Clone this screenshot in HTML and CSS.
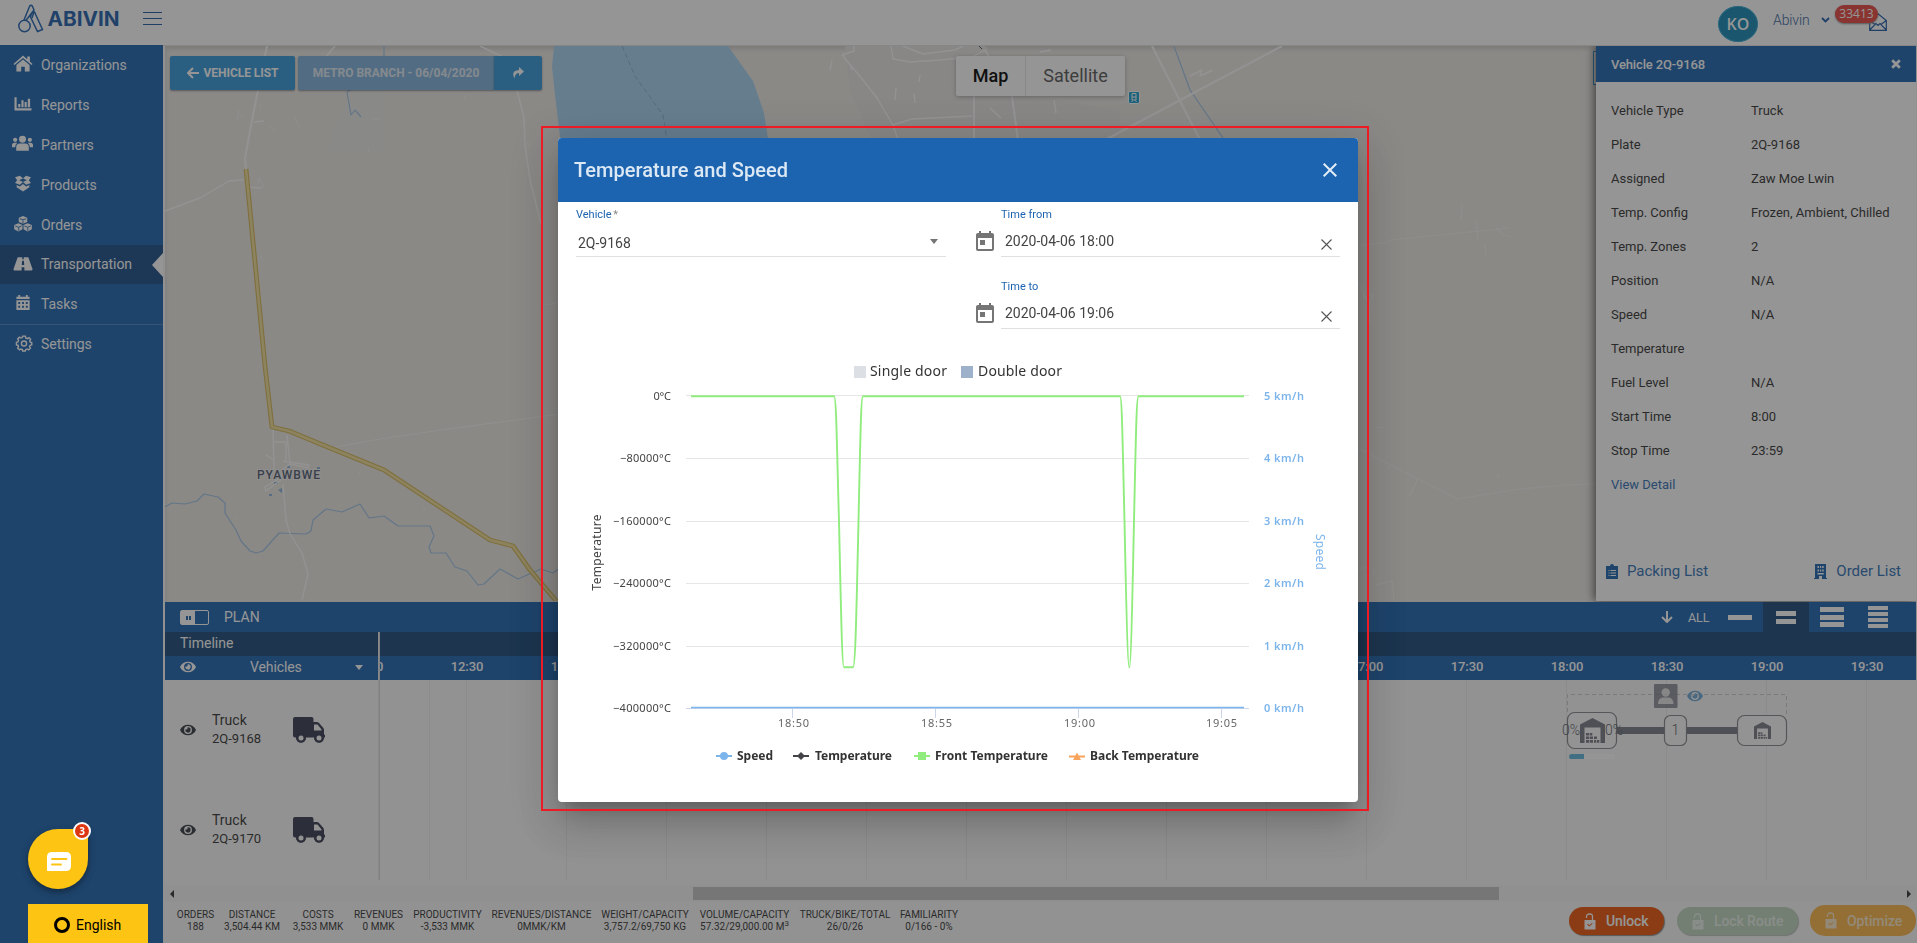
FILE: index.html
```html
<!DOCTYPE html>
<html lang="en">
<head>
<meta charset="utf-8">
<title>Abivin - Transportation</title>
<link rel="stylesheet" href="styles.css">
</head>
<body>
<svg class="defs" width="0" height="0">
  <symbol id="eye" viewBox="0 0 576 512"><path d="M572.500 241.400C518.300 135.600 410.900 64 288 64S57.700 135.600 3.500 241.400a32.400 32.400 0 0 0 0 29.200C57.700 376.400 165.100 448 288 448s230.300-71.600 284.500-177.400a32.400 32.400 0 0 0 0-29.200zM288 400a144 144 0 1 1 144-144 143.900 143.900 0 0 1-144 144zm0-240a95.300 95.300 0 0 0-25.300 3.800 47.900 47.900 0 0 1-66.900 66.900A95.800 95.800 0 1 0 288 160z"/></symbol>
  <symbol id="truck" viewBox="0 0 32 26"><path fill-rule="evenodd" d="M2 0H18.500Q20.500 0 20.500 2V5H24Q25 5 26 6L30 10.500Q31 11.500 31 13V17.500H31.200Q32 17.500 32 18.300V20.500H31A5 5 0 0 1 21 20.500H13A5 5 0 0 1 3 20.500H2Q0 20.500 0 18.500V2Q0 0 2 0ZM21 7.500V13.500H28.500V12.500L24.500 7.500Z"/><circle cx="8" cy="21" r="4.800"/><circle cx="26" cy="21" r="4.800"/><circle cx="8" cy="21" r="2.500" fill="#fafafa"/><circle cx="26" cy="21" r="2.500" fill="#fafafa"/></symbol>
  <symbol id="house" viewBox="0 0 25 25"><path d="M0 25V6.500L12.500 0 25 6.500V25H20.500V9.500H4.500V25Z"/><path d="M6 15h3.300v2.500H6zM10 15h2.300v2.500H10zM6 18.500h3.300V21H6zM10 18.500h3v2.500h-3zM14 18.500h3V21h-3zM6 22h3.300v2.700H6zM10 22h3v2.700h-3zM14 22h2.300v2.700H14zM17 22h2.300v2.700H17z"/></symbol>
  <symbol id="calendar" viewBox="3 1 18 20"><path d="M19 3h-1V1h-2v2H8V1H6v2H5c-1.110 0-2 .9-2 2v14c0 1.100.89 2 2 2h14c1.100 0 2-.9 2-2V5c0-1.100-.9-2-2-2zm0 16H5V8h14v11zM7 10h5v5H7z"/></symbol>
  <symbol id="lock" viewBox="0 0 12 17"><path d="M2.500 5V3.500Q2.500 1 5.500 1T8.500 3.500V7" fill="none" stroke="currentColor" stroke-width="1.300"/><path fill="currentColor" fill-rule="evenodd" d="M.5 7H11.500V16.500H.5ZM3.200 11.500 5.300 13.500 8.700 10.600 8 9.900 5.300 12.200 4 10.800Z"/></symbol>
</svg>

<div class="app">
  <header class="topbar">
    <svg class="logo" width="104" height="32" viewBox="0 0 104 32">
      <g fill="none" stroke="#1f63b1" stroke-width="1.500"><circle cx="6.500" cy="22" r="5.700"/><path d="M6 16 11.500 2.500Q13 .2 14.500 2.500L16 6 7.500 17M13.500 9.500 16.500 8 24.500 25.500 19.500 27.500 12.500 13Z"/><path d="M16 8 14 14"/></g>
      <text x="29.500" y="21.600" textLength="72" lengthAdjust="spacingAndGlyphs" class="logo-text">ABIVIN</text>
    </svg>
    <div class="burger"><i></i><i></i><i></i></div>
    <div class="account">
      <div class="avatar">KO</div>
      <span class="account-name">Abivin</span>
      <svg class="chev" width="9" height="6" viewBox="0 0 9 6"><path d="M1 1 4.500 4.500 8 1" fill="none" stroke="#1f5aa5" stroke-width="1.800"/></svg>
      <div class="mail">
        <svg width="18" height="18" viewBox="0 0 18 18"><path d="M.7 7.500 9 .8 17.300 7.500V17.300H.7ZM.7 7.500 6 11.500M17.300 7.500 12 11.500M.7 17 7 10.500 9 12.500 11 10.500 17.300 17" fill="none" stroke="#1f5aa5" stroke-width="1.200"/></svg>
        <span class="mail-count">33413</span>
      </div>
    </div>
  </header>

  <div class="body">
    <nav class="sidebar">
      <a class="nav-item"><svg viewBox="0 0 18 16"><path d="M9 .5 0 8.500 1 9.500 9 2.800 17 9.500 18 8.500 15.500 6.200V1.500H13V4ZM9 4.300 2.800 9.500V15.500H7.300V11H10.700V15.500H15.200V9.500Z"/></svg><span>Organizations</span></a>
      <a class="nav-item"><svg viewBox="0 0 18 16"><path d="M1 2H3V12.500H17V14.500H1ZM4.500 8.500H6.500V11.500H4.500ZM7.500 5H9.500V11.500H7.500ZM10.500 6.500H12.500V11.500H10.500ZM13.500 3.500H15.700V11.500H13.500Z"/></svg><span>Reports</span></a>
      <a class="nav-item"><svg class="wide" viewBox="0 0 20 16"><circle cx="10" cy="4" r="3.300"/><circle cx="3" cy="4.500" r="2"/><circle cx="17" cy="4.500" r="2"/><path d="M4 15V11.500Q4 8 7.500 8H12.500Q16 8 16 11.500V15ZM0 10Q0 7.300 2.500 7.300H5Q3 9 3 11.500H0ZM20 10Q20 7.300 17.500 7.300H15Q17 9 17 11.500H20Z"/></svg><span>Partners</span></a>
      <a class="nav-item"><svg viewBox="0 0 18 16"><path d="M1.500 2 6 .8 9 3 12 .8 16.500 2 14.500 5 16.500 7.500 12 9.200 9 6.500 6 9.200 1.500 7.500 3.500 5ZM9 3 5.500 5 9 6.500 12.500 5ZM3 9.500 6 10.800 9 8.500 12 10.800 15 9.500V11.500L9 15.500 3 11.500Z" fill-rule="evenodd"/></svg><span>Products</span></a>
      <a class="nav-item"><svg viewBox="0 0 18 16"><path d="M5 2.500 9 1 13 2.500V6.500L9 8.200 5 6.500ZM.7 9.500 4.700 7.700 8.500 9.500V13.500L4.700 15.500.7 13.500ZM9.500 9.500 13.300 7.700 17.300 9.500V13.500L13.300 15.500 9.500 13.500Z"/><path class="cut" d="M6 3.500 9 4.500 12 3.500M1.700 10.300 4.700 11.500 7.700 10.300M10.300 10.300 13.300 11.500 16.300 10.300M9 5V8M5 11.500V15M13.500 11.500V15"/></svg><span>Orders</span></a>
      <a class="nav-item active"><svg viewBox="0 0 18 16"><path fill-rule="evenodd" d="M4 2H8.300V4H9.700V2H14L18 13.500Q18 14.500 17 14.500H10.300V11.500H7.700V14.500H1Q0 14.500 0 13.500ZM8.200 5.500H9.800L10.200 9.500H7.800Z"/></svg><span>Transportation</span></a>
      <a class="nav-item"><svg viewBox="0 0 18 18"><path fill-rule="evenodd" d="M4 1H6V3H12V1H14V3H16V5.300H2V3H4ZM2 6.500H16V17H2ZM4 8.500V10.500H6V8.500ZM8 8.500V10.500H10V8.500ZM12 8.500V10.500H14V8.500ZM4 12.500V14.500H6V12.500ZM8 12.500V14.500H10V12.500ZM12 12.500V14.500H14V12.500Z"/></svg><span>Tasks</span></a>
      <a class="nav-item ruled"><svg class="gear" viewBox="0 0 18 18"><path d="M7.600 1.200H10.400L10.900 3.200 12.500 3.900 14.300 2.800 16 4.700 15 6.400 15.600 7.600 17.200 8V10.500L15.400 10.900 14.800 12.400 15.800 14 13.900 15.800 12.300 14.800 10.800 15.500 10.400 17H7.600L7.200 15.400 5.700 14.800 4.200 15.700 2.300 13.900 3.200 12.300 2.600 10.800 1 10.400V7.700L2.600 7.300 3.200 5.700 2.300 4.200 4.200 2.300 5.700 3.200 7.200 2.700Z"/><circle cx="9" cy="9" r="2.700"/></svg><span>Settings</span></a>
    </nav>

    <main class="main">
      <section class="map">
        <svg class="map-canvas" viewBox="165 46 1751 555" width="1751" height="555" fill="none" stroke-linejoin="round">
          <path fill="#e7e4e2" d="M845 46H985L1030 96 1120 110V160H880L850 90Z"/>
          <path fill="#e3e8ef" d="M325 153 352 90H385V153Z" opacity=".35"/>
          <path fill="#a6d2f2" d="M554 46 552 67 555 95 561 145H769L764 113 753 81 728 46Z"/>
          <path stroke="#88aed6" stroke-dasharray="5 3" d="M622 46 635 76 663 115 667 140"/>
          <g stroke="#9fc3e4" stroke-width="1.200">
            <path d="M165 507 172 503 185 504 197 501 204 494 218 497 225 503 225 513 236 530 241 541 250 551 256 553 263 551 279 533 306 534 311 531 313 520 326 509 342 512 360 504 369 518 384 516 398 526 430 526 434 536 429 547 431 553 446 553 455 567 467 571 478 585 484 584 500 569 518 579 541 569 553 573 560 568"/>
            <path d="M384 46V70L347 92 351 115 355 110 361 117"/>
            <path d="M1174 46 1190 90 1223 138"/>
          </g>
          <g fill="#86b3dc"><path d="M287 466h3v2h-3zM317 467h3v2h-3zM274 482h4v2h-4zM278 490l4-2v5zM269 494h3v2h-3z"/></g>
          <g stroke="#fafafa" stroke-width="1.400">
            <path d="M267 46 254 110 245 158 246 170" stroke-width="2"/>
            <path d="M165 211 200 198 229 181 244 180M246 187 262 188M254 122 264 121M335 46 320 64M480 46 501 56 517 90 524 118 525 145 530 180 541 224"/>
            <path d="M336 447 380 439 448 429 560 414" stroke="#f4f4f4" stroke-width="1"/>
            <path d="M273 429 274 470M287 435 290 464 282 470 281 480 266 491 265 487 280 478M273 442 286 442 286 460M283 461 309 465 308 468 290 464M266 455 274 460M283 484 286 520 290 534 302 553 308 574 302 600"/>
            <path d="M842 55 863 80 877 98 893 125 898 140M842 55 854 51V46M893 125 912 119 972 116M891 46 893 59 910 62 940 60 972 57 985 50M903 46 923 54 955 50 963 46"/>
            <path d="M974 96V140M985 50 1012 96 1018 140M1282 46 1105 140M1152 46 1200 140" stroke-width="2"/>
            <path d="M832 60 830 70M850 64 852 70M920 75 919 82M896 88 895 100M914 94 915 103M990 108 1001 118M1054 100 1056 113M1190 76 1202 70 1200 76 1213 70M1040 52 1051 50"/>
          </g>
          <g stroke="#f3f3f3" stroke-width="1.200" opacity=".8">
            <path d="M1358 246 1388 242 1390 240 1509 228M1478 240 1476 221M1462 205 1461 220M1496 228 1505 236 1513 237M1485 245 1486 257M1528 230V233M1359 283 1369 305 1373 295M1360 299 1373 294M1369 305 1370 324"/>
            <path d="M1358 448 1457 499 1495 493 1520 489 1565 485 1596 484M1418 479 1409 497M1376 428 1384 427M1388 469 1392 465M1480 489 1480 491M1587 484V478M1358 570 1367 567M1374 570V574M1376 585 1392 581 1394 600M1497 474 1499 479"/>
            <path d="M239 110 237 121M240 115 243 118M260 104 261 110M270 126 275 133M294 116 300 128M371 119 381 119M466 95 464 99M437 83 436 91M368 148 369 152M258 184 259 178 264 187M525 143 530 145M541 305 552 304 558 302M260 255 263 261M359 475 360 471M424 511V507M235 516 237 519"/>
          </g>
          <path stroke="#d6b657" stroke-width="4.800" d="M246 169 265 366 272 427 289 431 318 443 384 470 490 540 513 546 530 570 558 603"/>
          <path stroke="#eedd98" stroke-width="2.600" d="M246 169 265 366 272 427 289 431 318 443 384 470 490 540 513 546 530 570 558 603"/>
          <text class="town" x="257" y="479" textLength="63">PYAWBWE</text>
          <g transform="translate(1128.500 91.500)"><rect width="11" height="12" rx="1.500" fill="#16a0cf" stroke="#fff"/><path d="M3.500 2h4v6.500h-4zM3.500 5.500h4M4 9 3 10.500M7 9 8 10.500" stroke="#fff"/></g>
          <path stroke="#555" d="M979 46 982 49"/>
        </svg>
        <div class="map-tools">
          <button class="tool back"><svg width="12" height="12" viewBox="0 0 12 12"><path d="M6 1 1 6 6 11M1 6H12" fill="none" stroke="#fff" stroke-width="2"/></svg>VEHICLE LIST</button>
          <div class="tool-group"><span class="tool branch">METRO BRANCH - 06/04/2020</span><button class="tool share"><svg width="12" height="12" viewBox="0 0 12 12"><path fill="#fff" d="M7 0 12 4.500 7 9V6Q3 6 2.500 11.500-1.500 3.500 7 3Z"/></svg></button></div>
        </div>
        <div class="map-type"><span class="on">Map</span><span>Satellite</span></div>
        <div class="edge-tab"></div>
        <aside class="vehicle">
          <h2>Vehicle 2Q-9168<svg width="10" height="10" viewBox="0 0 10 10"><path d="M1.200 1.200 8.800 8.800M8.800 1.200 1.200 8.800" stroke="#fff" stroke-width="2.800"/></svg></h2>
          <dl>
            <dt>Vehicle Type</dt><dd>Truck</dd>
            <dt>Plate</dt><dd>2Q-9168</dd>
            <dt>Assigned</dt><dd>Zaw Moe Lwin</dd>
            <dt>Temp. Config</dt><dd>Frozen, Ambient, Chilled</dd>
            <dt>Temp. Zones</dt><dd>2</dd>
            <dt>Position</dt><dd>N/A</dd>
            <dt>Speed</dt><dd>N/A</dd>
            <dt>Temperature</dt><dd></dd>
            <dt>Fuel Level</dt><dd>N/A</dd>
            <dt>Start Time</dt><dd>8:00</dd>
            <dt>Stop Time</dt><dd>23:59</dd>
            <dt class="link">View Detail</dt><dd></dd>
          </dl>
          <div class="lists">
            <a><svg width="12" height="15" viewBox="0 0 12 15"><path fill="#1c64b0" fill-rule="evenodd" d="M0 2H4Q4 0 6 0T8 2H12V15H0ZM2.500 6V7H3.500V6ZM4.500 6V7H10V6ZM2.500 8.500V9.500H3.500V8.500ZM4.500 8.500V9.500H10V8.500ZM2.500 11V12H3.500V11ZM4.500 11V12H10V11Z"/></svg>Packing List</a>
            <a><svg width="13" height="15" viewBox="0 0 13 15"><path fill="#1c64b0" fill-rule="evenodd" d="M1 0H12V14H13V15H0V14H1ZM3.500 2V4H5V2ZM6 2V4H7.200V2ZM8.200 2V4H9.700V2ZM3.500 5.500V7.500H5V5.500ZM6 5.500V7.500H7.200V5.500ZM8.200 5.500V7.500H9.700V5.500ZM3.500 9V10.500H9.700V9ZM5 12V15H8V12Z"/></svg>Order List</a>
          </div>
        </aside>
      </section>

      <section class="plan">
        <div class="plan-bar">
          <span class="toggle"><i></i></span><span class="plan-title">PLAN</span>
          <div class="plan-actions">
            <svg width="12" height="12" viewBox="0 0 12 12"><path d="M6 0V11M1 6 6 11 11 6" fill="none" stroke="#fff" stroke-width="2"/></svg>
            <span>ALL</span>
            <b class="bars one"><i></i></b><b class="bars two"><i></i><i></i></b><b class="bars three"><i></i><i></i><i></i></b><b class="bars four"><i></i><i></i><i></i><i></i></b>
          </div>
        </div>
        <div class="timeline">
          <div class="tl-side">
            <div class="tl-title">Timeline</div>
            <div class="tl-filter"><svg class="eye" width="16" height="14"><use href="#eye"/></svg><span>Vehicles</span><i class="caret"></i></div>
            <div class="tl-vehicle"><svg class="eye" width="16" height="14"><use href="#eye"/></svg><p>Truck<small>2Q-9168</small></p><svg class="truck" width="32" height="26"><use href="#truck"/></svg></div>
            <div class="tl-vehicle"><svg class="eye" width="16" height="14"><use href="#eye"/></svg><p>Truck<small>2Q-9170</small></p><svg class="truck" width="32" height="26"><use href="#truck"/></svg></div>
          </div>
          <div class="tl-main">
            <div class="tl-day"></div>
            <div class="tl-hours"><span>12:00</span><span>12:30</span><span>13:00</span><span>13:30</span><span>14:00</span><span>14:30</span><span>15:00</span><span>15:30</span><span>16:00</span><span>16:30</span><span>17:00</span><span>17:30</span><span>18:00</span><span>18:30</span><span>19:00</span><span>19:30</span></div>
            <div class="tl-grid">
              <svg class="route" width="240" height="100" viewBox="1557 680 240 100">
                <path d="M1567.500 712V694.500H1786.500V716" fill="none" stroke="#ccc" stroke-dasharray="4 3"/>
                <g opacity=".75"><rect x="1654" y="684" width="23.500" height="24" rx="1" fill="#6b7080"/><circle cx="1665.700" cy="692.500" r="4.200" fill="#ddd"/><path fill="#ddd" d="M1658 704Q1658 698 1663 697.500H1668.500Q1673.500 698 1673.500 704Z"/></g>
                <svg x="1687" y="689" width="16" height="14" fill="#6fa8d6"><use href="#eye"/></svg>
                <g fill="#fbfbfb" stroke="#84878c" stroke-width="1.200"><rect x="1567.500" y="712.500" width="49" height="36" rx="7"/><rect x="1664.500" y="715.500" width="22" height="30" rx="6"/><rect x="1737.500" y="715.500" width="49" height="30" rx="7"/></g>
                <path d="M1617 730.500H1664M1687 730.500H1737" stroke="#777c86" stroke-width="7"/>
                <g fill="#777c86"><svg x="1580" y="718" width="25" height="25"><use href="#house"/></svg><svg x="1754" y="722" width="17" height="17"><use href="#house"/></svg></g>
                <g class="route-text"><text x="1562" y="735">0%</text><text x="1605" y="735">0%</text><text x="1671.500" y="735">1</text></g>
                <rect x="1569" y="754" width="46" height="5" rx="1" fill="#fff"/><path fill="#5cb4dc" d="M1571 754H1584V759H1571Q1569 759 1569 756.500T1571 754Z"/>
              </svg>
            </div>
          </div>
        </div>
        <div class="scroll"><i class="arr left"></i><div class="track"><div class="thumb"></div></div><i class="arr right"></i></div>
        <footer class="stats">
          <p class="w1">ORDERS<br>188</p><p class="w2">DISTANCE<br>3,504.44 KM</p><p class="w3">COSTS<br>3,533 MMK</p><p class="w4">REVENUES<br>0 MMK</p><p class="w5">PRODUCTIVITY<br>-3,533 MMK</p><p class="w6">REVENUES/DISTANCE<br>0MMK/KM</p><p class="w7">WEIGHT/CAPACITY<br>3,757.2/69,750 KG</p><p class="w8">VOLUME/CAPACITY<br>57.32/29,000.00 M<sup>3</sup></p><p class="w9">TRUCK/BIKE/TOTAL<br>26/0/26</p><p class="w10">FAMILIARITY<br>0/166 - 0%</p>
          <div class="route-buttons">
            <button class="pill unlock"><svg width="12" height="17"><use href="#lock"/></svg>Unlock</button>
            <button class="pill lockroute"><svg width="12" height="17"><use href="#lock"/></svg>Lock Route</button>
            <button class="pill optimize"><svg width="12" height="17"><use href="#lock"/></svg>Optimize</button>
          </div>
        </footer>
      </section>
    </main>
  </div>
</div>

<div class="backdrop"></div>

<div class="chat">
  <svg width="24" height="19" viewBox="0 0 24 19"><path fill="#fff" d="M5 0H19Q24 0 24 5V14Q24 19 19 19H0V5Q0 0 5 0Z"/><path d="M5 7H19.500M5 12.500H14" stroke="#fdc413" stroke-width="1.800" stroke-linecap="round"/></svg>
  <span class="chat-count">3</span>
</div>
<div class="lang"><i></i>English</div>

<div class="dialog">
  <div class="dialog-head"><h1>Temperature and Speed</h1><svg width="14" height="14" viewBox="0 0 14 14"><path d="M.7.7 13.300 13.300M13.300.7.7 13.300" stroke="#e4ecf6" stroke-width="2"/></svg></div>
  <div class="form">
    <div class="field vehicle-field"><label>Vehicle<em> *</em></label><div class="value"><span>2Q-9168</span><i class="caret"></i></div></div>
    <div class="dates">
      <div class="date"><svg class="cal" width="18" height="20"><use href="#calendar"/></svg><div class="field"><label>Time from</label><div class="value"><span>2020-04-06 18:00</span><svg width="11" height="11" viewBox="0 0 11 11"><path d="M.5.5 10.500 10.500M10.500.5.5 10.500" stroke="#555" stroke-width="1.100"/></svg></div></div></div>
      <div class="date"><svg class="cal" width="18" height="20"><use href="#calendar"/></svg><div class="field"><label>Time to</label><div class="value"><span>2020-04-06 19:06</span><svg width="11" height="11" viewBox="0 0 11 11"><path d="M.5.5 10.500 10.500M10.500.5.5 10.500" stroke="#555" stroke-width="1.100"/></svg></div></div></div>
    </div>
  </div>
  <svg class="chart" width="800" height="450" viewBox="558 352 800 450">
    <rect x="854" y="366" width="12" height="12" fill="#dce0e4"/><rect x="961" y="366" width="12" height="12" fill="#9db1cb"/>
    <g class="door"><text x="870" y="376" textLength="77">Single door</text><text x="978" y="376" textLength="84">Double door</text></g>
    <path stroke="#e6e6e6" d="M686 395.500H1249M686 458.500H1249M686 521.500H1249M686 583.500H1249M686 646.500H1249"/>
    <path stroke="#ccd6eb" d="M686 708.500H1249M792.500 709V718M935.500 709V718M1078.500 709V718M1221.500 709V718"/>
    <path fill="none" stroke="#90ed7d" stroke-width="1.900" stroke-linejoin="round" d="M691 396.300H834C836.500 396.300 837 455 839 521 841 610 842 667.300 844 667.300H853C855.500 667.300 856.500 610 858.500 521 860.500 430 861 396.300 863 396.300H1120C1122 396.300 1122.500 440 1124.500 521 1126.500 620 1128 667.500 1129.300 667.500S1132 620 1134 521C1136 430 1136.500 396.300 1138.500 396.300H1244"/>
    <path stroke="#7cb5ec" stroke-width="1.500" d="M691 707.600H1244"/>
    <g class="axis-l"><text x="653.500" y="400" textLength="17.500">0°C</text><text x="620" y="462" textLength="51">−80000°C</text><text x="613" y="525" textLength="58">−160000°C</text><text x="613" y="587" textLength="58">−240000°C</text><text x="613" y="650" textLength="58">−320000°C</text><text x="613" y="712" textLength="58">−400000°C</text></g>
    <g class="axis-r"><text x="1264" y="400" textLength="40">5 km/h</text><text x="1264" y="462" textLength="40">4 km/h</text><text x="1264" y="525" textLength="40">3 km/h</text><text x="1264" y="587" textLength="40">2 km/h</text><text x="1264" y="650" textLength="40">1 km/h</text><text x="1264" y="712" textLength="40">0 km/h</text></g>
    <g class="axis-x"><text x="778" y="727" textLength="31">18:50</text><text x="921" y="727" textLength="31">18:55</text><text x="1064" y="727" textLength="31">19:00</text><text x="1206" y="727" textLength="31">19:05</text></g>
    <text class="axis-title" transform="translate(600.500 590.500) rotate(-90)" textLength="76">Temperature</text>
    <text class="axis-title speed" transform="translate(1316 534) rotate(90)" textLength="36">Speed</text>
    <g stroke-width="2"><path stroke="#7cb5ec" d="M716 756H732"/><circle cx="724" cy="756" r="4" fill="#7cb5ec"/><path stroke="#434348" d="M793 756H809"/><path fill="#434348" d="M801 752 805 756 801 760 797 756Z"/><path stroke="#90ed7d" d="M914 756H930"/><path fill="#90ed7d" d="M918 752H926V760H918Z"/><path stroke="#f7a35c" d="M1069 756.500H1085"/><path fill="#f7a35c" d="M1077 752.500 1081 760H1073Z"/></g>
    <g class="series"><text x="737" y="760" textLength="36">Speed</text><text x="815" y="760" textLength="77">Temperature</text><text x="935" y="760" textLength="113">Front Temperature</text><text x="1090" y="760" textLength="109">Back Temperature</text></g>
  </svg>
</div>
<div class="highlight"></div>
</body>
</html>
```
FILE: styles.css
```css
* { box-sizing: border-box; }
body { margin: 0; width: 1917px; height: 943px; overflow: hidden; font-family: Roboto, "Liberation Sans", sans-serif; color: #333; }
h1, h2, p, dl, dd { margin: 0; }
button { border: 0; padding: 0; font: inherit; }
.defs { position: absolute; }

.app { display: flex; flex-direction: column; height: 943px; background: #fff; isolation: isolate; }
.topbar { display: flex; align-items: flex-start; height: 46px; padding-left: 18px; background: #fff; border-bottom: 1px solid #e2e2e2; }
.logo { margin-top: 4px; }
.logo-text { font: 700 20px Inter, sans-serif; fill: #1f5fab; }
.burger { display: flex; flex-direction: column; gap: 5px; margin: 12px 0 0 21px; width: 19px; }
.burger i { height: 1px; background: #1f5aa5; }
.account { display: flex; margin-left: auto; padding-right: 30px; }
.avatar { width: 40px; height: 36px; margin-top: 6px; border: 1px solid #2ba3cf; border-radius: 50%; background: #1488b5; color: #fff; font: 600 16px/34px "Open Sans", sans-serif; text-align: center; }
.account-name { margin: 11px 10px 0 15px; width: 38px; font-size: 14px; line-height: 18px; font-weight: 300; letter-spacing: -.1px; color: #335f9c; }
.chev { margin-top: 17px; }
.mail { position: relative; margin: 13px 0 0 39px; height: 18px; }
.mail-count { position: absolute; right: 9px; top: -8px; width: 43px; height: 18px; border-radius: 9px; background: #e8463e; color: #fff; font: 12px/18px "Open Sans", sans-serif; text-align: center; box-shadow: 0 1px 2px #888; }

.body { display: flex; flex: 1; min-height: 0; }
.sidebar { flex: 0 0 163px; margin-top: -1px; background: #1c64b0; }
.nav-item { position: relative; display: flex; align-items: center; height: 40px; padding-left: 13px; color: #fff; font-size: 14px; letter-spacing: -.05px; }
.nav-item svg { width: 20px; height: 17px; fill: #fff; margin-right: 8px; flex: none; margin-top: -3px; }
.nav-item .wide { margin-left: -1px; width: 21px; }
.nav-item .cut { stroke: #1c64b0; fill: none; stroke-width: .8; }
.nav-item .gear { fill: none; stroke: #fff; stroke-width: 1.500; margin-left: 1px; margin-right: 7px; }
.nav-item.active { height: 39px; background: #1a4d87; }
.nav-item.active::after { content: ""; position: absolute; right: 0; top: 8px; border: 12px solid transparent; border-left: 0; border-right: 11px solid #fff; }
.nav-item.active span, .nav-item.ruled span { margin-top: -1px; }
.nav-item.ruled { border-top: 1px solid #4d83bd; }

.main { display: flex; flex-direction: column; flex: 1; min-width: 0; padding-left: 2px; padding-right: 1px; background: #f8f8f8; }
.map { position: relative; display: flex; justify-content: space-between; height: 556px; background: #ebe8e3; overflow: hidden; box-shadow: inset 0 3px 4px rgba(0,0,0,.12); }
.map-canvas { position: absolute; left: 0; top: 0; }
.town { font: 500 12px Roboto, sans-serif; fill: #4f5b74; stroke: #f5f3ef; stroke-width: 2px; paint-order: stroke; }
.map-tools { position: relative; display: flex; gap: 3px; padding: 10px 0 0 5px; height: 44px; width: 791px; }
.tool { display: flex; align-items: center; justify-content: center; height: 34px; color: #fff; font-size: 12px; font-weight: 700; background: #3498db; border-radius: 2px; box-shadow: 0 1px 2px rgba(0,0,0,.4); letter-spacing: 0; }
.back { width: 125px; gap: 5px; letter-spacing: -.05px; }
.tool-group { display: flex; }
.branch { width: 196px; background: #7fb2dc; color: #dfe9f2; border-radius: 2px 0 0 2px; }
.share { width: 48px; border-radius: 0 2px 2px 0; }
.map-type { position: relative; display: flex; margin: 10px auto 0 0; height: 40px; background: #fff; border-radius: 2px; box-shadow: 0 1px 4px rgba(0,0,0,.3); font-size: 18px; line-height: 40px; color: #565656; }
.map-type span { width: 99px; text-align: center; }
.map-type .on { width: 70px; color: #000; font-weight: 500; border-right: 1px solid #e8e8e8; }
.edge-tab { position: relative; margin-top: 5px; width: 3px; height: 34px; border: 1px solid #3498db; border-right: 0; background: #fff; }
.vehicle { position: relative; width: 320px; height: 555px; background: #fff; box-shadow: -2px 0 9px rgba(0,0,0,.6); }
.vehicle h2 { display: flex; align-items: center; justify-content: space-between; height: 36px; padding: 0 15px; background: #1c64b0; color: #fff; font-size: 13px; font-weight: 500; letter-spacing: -.15px; }
.vehicle dl { display: grid; grid-template-columns: 140px 1fr; grid-auto-rows: 34px; padding: 12px 0 0 15px; font-size: 13px; line-height: 34px; letter-spacing: 0; white-space: nowrap; }
.vehicle .link { color: #2f6fb5; }
.lists { display: flex; justify-content: space-between; padding: 60px 15px 0 10px; font-size: 15px; line-height: 18px; color: #2f6fb5; letter-spacing: -.02px; }
.lists a { display: flex; align-items: center; gap: 9px; }

.plan { flex: 1; background: #fafafa; }
.plan-bar { display: flex; align-items: center; height: 30px; padding-left: 15px; background: #1c64b0; color: #fff; font-size: 14px; }
.toggle { width: 29px; height: 15px; border: 1px solid #fff; border-radius: 2px; background: linear-gradient(90deg, #fff 14px, transparent 14px); padding: 5px; }
.toggle i { display: block; width: 5px; height: 4px; border-left: 2px solid #1c64b0; border-right: 2px solid #1c64b0; }
.plan-title { margin-left: 15px; margin-top: -1px; font-size: 14px; }
.plan-actions { display: flex; align-items: center; margin-left: auto; margin-right: 15px; }
.plan-actions span { margin: 0 8px 0 15px; width: 21px; font-size: 12.500px; letter-spacing: -.1px; }
.bars { display: flex; flex-direction: column; align-items: center; justify-content: center; height: 30px; width: 46px; }
.bars i { width: 24px; height: 5px; background: #fff; }
.two { background: #194878; gap: 3px; }
.two i { width: 20px; }
.three { gap: 2.500px; }
.four { gap: 2.300px; }
.four i { width: 20px; height: 4px; }

.timeline { display: flex; height: 248px; }
.tl-side { width: 214px; border-right: 1px solid #e8e8e8; flex: none; box-shadow: 1px 0 #d8d8d8; z-index: 1; }
.tl-title, .tl-day { height: 24px; background: #194878; color: #fff; font-size: 14px; line-height: 22px; padding-left: 15px; }
.tl-filter { display: flex; align-items: center; height: 24px; background: #1c64b0; color: #fff; font-size: 14px; line-height: 22px; padding: 0 15px 2px 15px; letter-spacing: -.1px; }
.eye { fill: #333b44; }
.tl-filter .eye { fill: #fff; }
.tl-filter span { margin: 0 auto 0 54px; }
.caret { border: 4.500px solid transparent; border-top: 5px solid #fff; border-bottom: 0; }
.tl-vehicle { display: flex; align-items: center; height: 100px; padding-left: 15px; }
.tl-vehicle p { margin-left: 16px; margin-top: -1px; width: 81px; font-size: 14px; line-height: 19px; }
.tl-vehicle small { display: block; font-size: 13px; line-height: 18px; }
.truck { fill: #363b50; }
.tl-main { flex: 1; min-width: 0; overflow: hidden; }
.tl-hours { display: flex; height: 24px; background: #1c64b0; color: #fff; font-size: 13px; font-weight: 500; line-height: 22px; overflow: hidden; letter-spacing: -.1px; }
.tl-hours span { flex: 0 0 100px; text-align: center; }
.tl-hours span:first-child { margin-left: -62px; }
.tl-grid { height: 200px; padding-left: 1178px; background: repeating-linear-gradient(90deg, #ececec 0 1px, transparent 1px 100px) 87px 0; }
.route-text { font: 300 14px Roboto, sans-serif; fill: #5d6066; }
.scroll { display: flex; align-items: center; height: 17px; margin-top: 5px; padding: 0 5px; background: #f5f5f5; }
.track { flex: 1; padding-left: 519px; }
.thumb { width: 806px; height: 13px; background: #c4c4c4; }
.arr { border: 4px solid transparent; }
.left { border-left: 0; border-right-color: #333; }
.right { border-right: 0; border-left-color: #333; }
.stats { display: flex; height: 41px; padding: 6px 0 0 5px; font-size: 10px; line-height: 12px; text-align: center; white-space: nowrap; }
.stats p { flex: none; display: flow-root; height: 26px; margin-top: 1px; }
.stats sup { font-size: 8px; line-height: 0; }
.w1 { width: 51px; } .w2 { width: 62px; } .w3 { width: 70px; } .w4 { width: 51px; } .w5 { width: 87px; }
.w6 { width: 101px; } .w7 { width: 106px; } .w8 { width: 93px; } .w9 { width: 108px; } .w10 { width: 60px; }
.route-buttons { display: flex; align-items: flex-start; margin-left: auto; }
.pill { display: flex; align-items: center; height: 28px; margin-top: -1px; padding-left: 15px; gap: 10px; border-radius: 15px; color: #fff; font-size: 14px; font-weight: 500; letter-spacing: -.1px; box-shadow: 1px 1px 1px #888; }
.unlock { width: 95px; margin-right: 13px; background: #ec5508; }
.lockroute { width: 121px; margin-right: 12px; background: #bdd5bd; color: #e9efe9; box-shadow: 1px 1px 1px #bbb; }
.optimize { width: 106px; height: 31px; margin-top: -3px; background: #fcb647; color: #fbe9ca; box-shadow: none; }

.backdrop { position: fixed; inset: 0; background: rgba(33,33,33,.48); }

.chat { position: fixed; left: 28px; top: 829px; width: 60px; height: 60px; display: flex; align-items: center; justify-content: center; padding: 4px 0 0 1px; background: #fdc413; border-radius: 50% 2px 50% 50%; box-shadow: 0 3px 7px rgba(0,0,0,.4); }
.chat-count { position: absolute; right: -3px; top: -7px; width: 18px; height: 18px; border: 2px solid #fff; border-radius: 50%; background: #dc3710; color: #fff; font: 700 10px/14px "Open Sans", sans-serif; text-align: center; }
.lang { position: fixed; left: 28px; top: 904px; width: 120px; height: 39px; display: flex; align-items: center; padding: 3px 0 0 26px; background: #fdc413; color: #000; font-size: 14px; }
.lang i { width: 16px; height: 16px; margin-right: 6px; border: 3px solid #000; border-radius: 50%; }

.dialog { position: fixed; left: 558px; top: 138px; width: 800px; height: 664px; background: #fff; border-radius: 4px; overflow: hidden; }
.highlight { position: fixed; left: 541px; top: 126px; width: 828px; height: 685px; border: 2px solid #ed1c24; }
.backdrop::after { content: ""; position: absolute; left: 558px; top: 138px; width: 800px; height: 664px; border-radius: 4px; box-shadow: 0 11px 15px -7px rgba(0,0,0,.2), 0 24px 38px 3px rgba(0,0,0,.14), 0 9px 46px 8px rgba(0,0,0,.12); }
.dialog-head { display: flex; align-items: center; justify-content: space-between; height: 64px; padding: 0 21px 0 16px; background: #1c64b0; }
.dialog-head h1 { font-size: 20px; font-weight: 500; letter-spacing: .03px; color: #dce8f4; }
.form { display: flex; justify-content: space-between; height: 150px; padding: 5px 18px 0; }
.field { flex: 1; display: flex; flex-direction: column; height: 50px; border-bottom: 1px solid #e0e0e0; }
.field label { padding-top: 1px; font-size: 11px; line-height: 13px; color: #1c64b0; letter-spacing: 0; }
.field em { font-style: normal; color: #8a8a8a; margin-left: -1px; }
.value { display: flex; justify-content: space-between; align-items: center; padding: 9px 8px 0 4px; font-size: 14px; line-height: 22px; color: #444; }
.value svg { margin-top: 6px; }
.vehicle-field { flex: 0 0 370px; }
.vehicle-field .value { padding: 11px 8px 0 2px; }
.form .caret { border-top-color: #757575; margin-top: -3px; }
.dates { width: 364px; display: grid; grid-auto-rows: 72px; }
.date { display: flex; gap: 7px; }
.cal { fill: #757575; margin-top: 24px; }
.chart { display: block; }
.chart text { font-family: "Noto Sans", "Open Sans", sans-serif; }
.door { font-size: 14px; fill: #333; }
.axis-l { font-size: 11px; fill: #444; }
.axis-r { font-size: 11px; font-weight: 600; fill: #7cb5ec; }
.axis-x { font-size: 11px; fill: #666; }
.axis-title { font-size: 12px; fill: #444; }
.axis-title.speed { fill: #7cb5ec; }
.series { font-size: 12px; font-weight: 700; fill: #333; }
```
